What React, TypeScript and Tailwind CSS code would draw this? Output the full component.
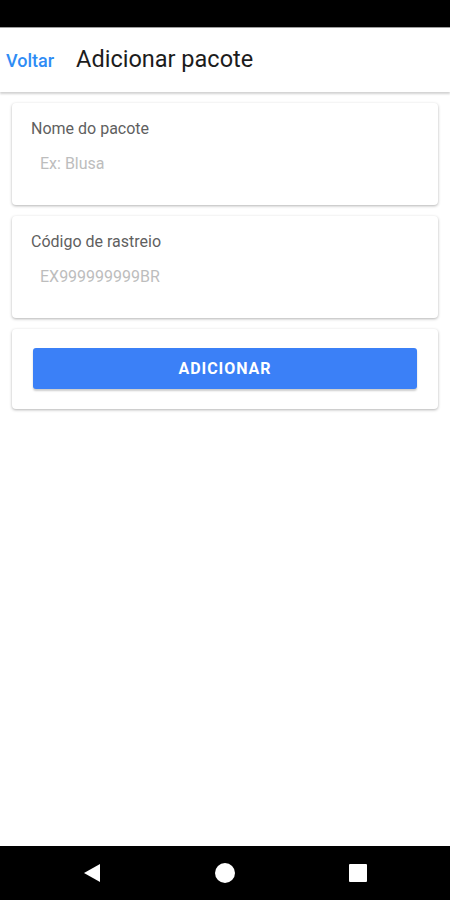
import React from 'react';

function Field({ label, placeholder }: { label: string; placeholder: string }) {
  return (
    <div className="bg-white rounded-[4px] shadow-[0_1px_3px_rgba(0,0,0,0.3)] h-[102px] pl-[19px] pt-[16px]">
      <div className="text-[16px] leading-[20px] text-[#5f5f5f]">{label}</div>
      <input
        type="text"
        placeholder={placeholder}
        className="mt-[15px] ml-[9px] text-[16px] leading-[20px] text-[#333] placeholder:text-[#bdbdbd] outline-none bg-transparent"
      />
    </div>
  );
}

export default function App() {
  return (
    <div className="w-[450px] h-[900px] flex flex-col bg-white overflow-hidden" style={{ fontFamily: 'Roboto, "Noto Sans", sans-serif' }}>
      {/* status bar */}
      <div className="h-[27px] bg-black shrink-0" />
      <div className="h-[1px] bg-[#9e9e9e] shrink-0" />

      {/* header */}
      <div className="h-[64px] shrink-0 flex items-center bg-white shadow-[0_2px_2px_rgba(0,0,0,0.18)] relative z-10">
        <button className="ml-[6px] text-[18px] font-medium text-[#2f8cf5]">Voltar</button>
        <h1 className="ml-[22px] text-[23.5px] text-[#1c1c1c]">Adicionar pacote</h1>
      </div>

      {/* form */}
      <div className="flex-1 px-[12px] pt-[11px] flex flex-col gap-[11px]">
        <Field label="Nome do pacote" placeholder="Ex: Blusa" />
        <Field label="Código de rastreio" placeholder="EX999999999BR" />
        <div className="bg-white rounded-[4px] shadow-[0_1px_3px_rgba(0,0,0,0.3)] h-[80px] px-[21px] pt-[19px]">
          <button className="w-full h-[41px] rounded-[3px] bg-[#3b80f7] text-white text-[16px] font-bold tracking-[0.06em] shadow-[0_2px_2px_rgba(0,0,0,0.2)]">
            ADICIONAR
          </button>
        </div>
      </div>

      {/* nav bar */}
      <div className="h-[54px] shrink-0 bg-black flex items-center justify-center gap-[63px]">
        <div className="w-[70px] flex justify-center">
          <svg width="18" height="20" viewBox="0 0 18 20"><path d="M17 1 L1 10 L17 19 Z" fill="white" /></svg>
        </div>
        <div className="w-[70px] flex justify-center">
          <div className="w-[20px] h-[20px] rounded-full bg-white" />
        </div>
        <div className="w-[70px] flex justify-center">
          <div className="w-[18px] h-[18px] bg-white rounded-[1px]" />
        </div>
      </div>
    </div>
  );
}
